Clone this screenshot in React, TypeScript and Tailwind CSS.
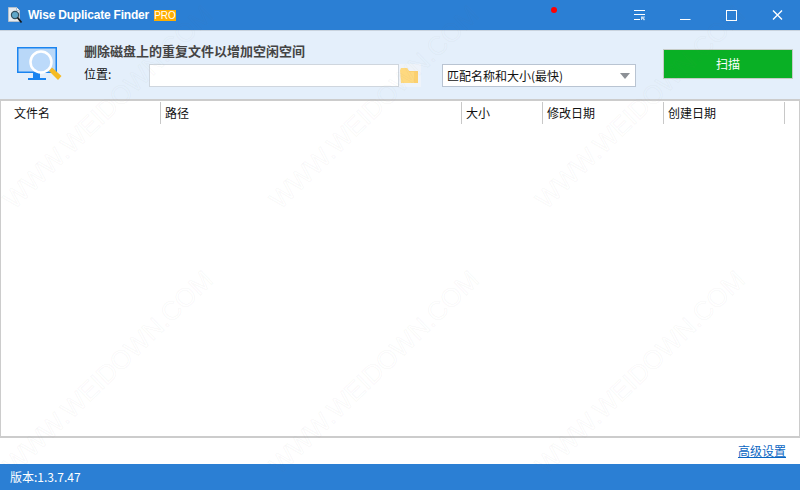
const cjk = "font-['Noto_Sans_CJK_SC','Liberation_Sans',sans-serif]";

const columns = [
  { label: "文件名", width: "w-[160px]", pad: "pl-[13px]" },
  { label: "路径", width: "w-[301px]", pad: "pl-[4px]" },
  { label: "大小", width: "w-[81px]", pad: "pl-[4px]" },
  { label: "修改日期", width: "w-[121px]", pad: "pl-[4px]" },
  { label: "创建日期", width: "w-[121px]", pad: "pl-[4px]" },
];

// centre of each faint watermark
const marks = [
  [108, 107], [374, 107], [640, 107],
  [108, 372], [374, 372], [640, 372],
];

function AppIcon() {
  return (
    <svg width="18" height="18" viewBox="0 0 18 18" className="shrink-0">
      <path d="M1.5 1.5h8l3 3v11h-11z" fill="#e6ebf0" stroke="#b4c0cc" />
      <path d="M9.5 1.5v3h3" fill="#fff" stroke="#b4c0cc" />
      <circle cx="8" cy="9" r="3.6" fill="#5fa6c8" stroke="#33505f" strokeWidth="1.2" />
      <path d="M10.5 11.5l4 5" stroke="#15191c" strokeWidth="1.8" />
    </svg>
  );
}

function MonitorIcon() {
  return (
    <svg width="45" height="35" viewBox="0 0 45 35" className="shrink-0">
      <rect x="0.75" y="0.75" width="38.5" height="24.5" fill="#b9d8f8" stroke="#1a84f0" strokeWidth="1.5" />
      <path d="M16 26h7v5h-7z" fill="#1a84f0" />
      <path d="M11 31h18v2H11z" fill="#1a84f0" />
      <circle cx="24" cy="15" r="10.5" fill="#bcdafa" stroke="#fff" strokeWidth="2.5" />
      <path d="M32 24l3-3.5 9.5 8.5-3.5 4z" fill="#f5bb25" />
    </svg>
  );
}

function FolderIcon() {
  return (
    <svg width="19" height="17" viewBox="0 0 19 17" className="-ml-[2px]">
      <path d="M1 1h6l2 3h9v12H1z" fill="#fbd06f" />
      <path d="M0 3.5 1 1h6l2 4h5v11H1z" fill="#fed97f" />
    </svg>
  );
}

function WindowButtons() {
  return (
    <div className="flex items-center">
      <svg width="11" height="12" viewBox="0 0 11 12" className="mr-[35px]">
        <path d="M0 1.5h11M0 5.5h11M0 10.5h6" stroke="#fff" />
        <path d="M7 7.5h4v1H9.5l1.5 2-1 1-2-2V11H7z" fill="#fff" opacity="0.75" />
      </svg>
      <svg width="11" height="12" viewBox="0 0 11 12" className="mr-[35px]">
        <path d="M0 10.5h10.5" stroke="#fff" />
      </svg>
      <svg width="11" height="12" viewBox="0 0 11 12" className="mr-[35px]">
        <rect x="0.5" y="1.5" width="10" height="10" fill="none" stroke="#fff" />
      </svg>
      <svg width="11" height="12" viewBox="0 0 11 12" className="mr-[17px]">
        <path d="M1 1.5l9 9M10 1.5l-9 9" stroke="#fff" strokeWidth="1.4" />
      </svg>
    </div>
  );
}

export default function App() {
  return (
    <div className={`relative flex h-[490px] w-[800px] flex-col overflow-hidden bg-white text-[12px] ${cjk}`}>
      {/* title bar */}
      <div className="flex h-[30px] shrink-0 items-center justify-between bg-[#2b7fd4] pl-[7px]">
        <div className="flex items-center">
          <AppIcon />
          <span className="ml-[3px] w-[121px] whitespace-nowrap font-['Liberation_Sans',sans-serif] text-[12px] font-bold tracking-[-0.2px] text-white">
            Wise Duplicate Finder
          </span>
          <span className="ml-[5px] h-[11px] w-[22px] bg-[#ffae00] text-center font-['Liberation_Sans',sans-serif] text-[10px] leading-[11px] text-white">
            PRO
          </span>
        </div>
        <WindowButtons />
      </div>

      {/* toolbar */}
      <div className="flex h-[71px] shrink-0 border-t border-b-[2px] border-t-[#c9d3de] border-b-[#cccccc] bg-[#e4effb]">
        <div className="ml-[17px] mt-[16px]">
          <MonitorIcon />
        </div>
        <div className="ml-[22px] flex flex-col">
          <div className="mt-[11px] h-[18px] text-[13px] font-bold leading-[18px] text-[#444444]">
            删除磁盘上的重复文件以增加空闲空间
          </div>
          <div className="mt-[4px] flex items-center">
            <span className="w-[65px] pb-[3px] leading-[20px] text-[#111111]">位置:</span>
            <div className="h-[23px] w-[250px] border border-[#cfd6de] bg-white" />
            <div className="flex h-[23px] w-[22px] items-center justify-center bg-[#eef3fa]">
              <FolderIcon />
            </div>
            <div className="ml-[21px] flex h-[23px] w-[194px] items-center justify-between border border-[#b9c4d2] bg-white pl-[4px] pr-[5px] text-[#111111]">
              <span>匹配名称和大小(最快)</span>
              <span className="h-0 w-0 border-x-[5px] border-t-[6px] border-x-transparent border-t-[#8c9096]" />
            </div>
          </div>
        </div>
        <button className="ml-[27px] mt-[18px] h-[30px] w-[130px] border border-[#c6cbc6] bg-[#09b025] text-[12px] text-white">
          扫描
        </button>
      </div>

      {/* file list */}
      <div className="flex min-h-0 flex-1 flex-col border-x border-b-[2px] border-x-[#cccccc] border-b-[#cccccc]">
        <div className="flex h-[23px] shrink-0 items-end text-[#111111]">
          {columns.map((col) => (
            <div
              key={col.label}
              className={`${col.width} ${col.pad} h-[22px] shrink-0 border-r border-r-[#c8c8c8] leading-[22px]`}
            >
              {col.label}
            </div>
          ))}
        </div>
      </div>

      {/* footer link */}
      <div className="flex h-[26px] shrink-0 items-center justify-end pr-[14px]">
        <a href="#" className="leading-[16px] text-[#0a66c2] underline">
          高级设置
        </a>
      </div>

      {/* status bar */}
      <div className="flex h-[26px] shrink-0 items-center bg-[#2b7fd4] pl-[10px] text-[12px] text-white">
        版本:1.3.7.47
      </div>

      {/* notification dot */}
      <div className="absolute left-[551px] top-[7px] h-[6px] w-[6px] rounded-full bg-[#ff0000]" />

      {/* watermark */}
      <div className="pointer-events-none absolute inset-0 overflow-hidden">
        {marks.map(([x, y]) => (
          <span
            key={`${x}-${y}`}
            className="absolute h-[30px] w-[290px] -rotate-[44deg] whitespace-nowrap text-center font-['Liberation_Sans',sans-serif] text-[26px] leading-[30px] text-transparent [-webkit-text-stroke:1px_rgba(120,120,120,0.05)]"
            style={{ left: x - 145, top: y - 15 }}
          >
            WWW.WEIDOWN.COM
          </span>
        ))}
      </div>
    </div>
  );
}
